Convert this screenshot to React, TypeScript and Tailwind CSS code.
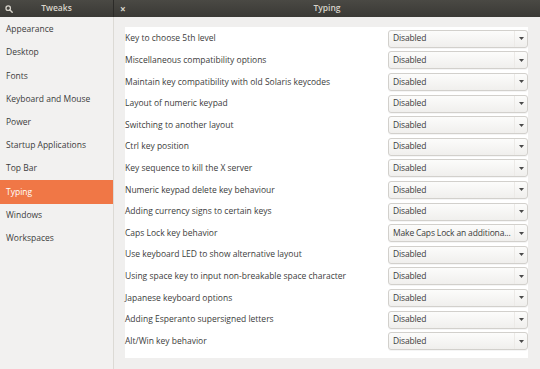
import React from 'react';

const sections = [
  'Appearance',
  'Desktop',
  'Fonts',
  'Keyboard and Mouse',
  'Power',
  'Startup Applications',
  'Top Bar',
  'Typing',
  'Windows',
  'Workspaces',
];

const options: { label: string; value: string }[] = [
  { label: 'Key to choose 5th level', value: 'Disabled' },
  { label: 'Miscellaneous compatibility options', value: 'Disabled' },
  { label: 'Maintain key compatibility with old Solaris keycodes', value: 'Disabled' },
  { label: 'Layout of numeric keypad', value: 'Disabled' },
  { label: 'Switching to another layout', value: 'Disabled' },
  { label: 'Ctrl key position', value: 'Disabled' },
  { label: 'Key sequence to kill the X server', value: 'Disabled' },
  { label: 'Numeric keypad delete key behaviour', value: 'Disabled' },
  { label: 'Adding currency signs to certain keys', value: 'Disabled' },
  { label: 'Caps Lock key behavior', value: 'Make Caps Lock an additiona...' },
  { label: 'Use keyboard LED to show alternative layout', value: 'Disabled' },
  { label: 'Using space key to input non-breakable space character', value: 'Disabled' },
  { label: 'Japanese keyboard options', value: 'Disabled' },
  { label: 'Adding Esperanto supersigned letters', value: 'Disabled' },
  { label: 'Alt/Win key behavior', value: 'Disabled' },
];

function Combo({ value }: { value: string }) {
  return (
    <div className="flex h-[18px] w-[140px] items-center rounded-[3px] border border-[#d2d0cc] bg-gradient-to-b from-[#fcfcfb] to-[#f0efed] pl-[4px] shadow-[0_1px_0_rgba(0,0,0,0.04)]">
      <span className="flex-1 whitespace-nowrap tracking-[-0.15px] text-[#3c3c3c]">{value}</span>
      <div className="flex h-full w-[13px] shrink-0 items-center justify-center border-l border-[#eceae7]">
        <svg width="5" height="3" viewBox="0 0 5 3">
          <path d="M0 0 L5 0 L2.5 3 Z" fill="#4a4a4a" />
        </svg>
      </div>
    </div>
  );
}

export default function App() {
  return (
    <div
      className="flex h-[369px] w-[540px] flex-col overflow-hidden bg-[#f2f1f0] text-[8.5px] text-[#3c3c3c]"
      style={{ fontFamily: '"Open Sans", "Noto Sans", sans-serif' }}
    >
      {/* Header bar */}
      <header className="flex h-[17px] shrink-0 bg-gradient-to-b from-[#4a4944] to-[#3a3935] text-[#d8d4cb]">
        <div className="relative flex w-[114px] items-center border-r border-[#2c2b28]">
          <svg width="8" height="8" viewBox="0 0 10 10" className="ml-[5px]">
            <circle cx="4" cy="4" r="2.8" fill="none" stroke="#d8d4cb" strokeWidth="1.6" />
            <path d="M6 6 L9 9" stroke="#d8d4cb" strokeWidth="1.8" strokeLinecap="round" />
          </svg>
          <span className="flex-1 text-center font-semibold pr-[13px]">Tweaks</span>
        </div>
        <div className="flex flex-1 items-center">
          <span className="ml-[6px] w-[10px] text-[10px] font-bold leading-none">×</span>
          <span className="flex-1 text-center font-semibold pr-[16px]">Typing</span>
        </div>
      </header>

      <div className="flex flex-1">
        {/* Sidebar */}
        <nav className="flex w-[114px] flex-col border-r border-[#dcdad5] bg-[#f2f1f0] pt-[1px]">
          {sections.map((s) => (
            <div
              key={s}
              className={
                s === 'Typing'
                  ? 'flex h-[23.2px] items-center bg-[#f07746] pl-[6px] text-white'
                  : 'flex h-[23.2px] items-center pl-[6px]'
              }
            >
              {s}
            </div>
          ))}
        </nav>

        {/* Content */}
        <main className="flex-1 bg-[#f0efee] pl-[11px] pr-[12px] pt-[10px]">
          <div className="flex flex-col bg-white py-[1px]">
            {options.map((o) => (
              <div key={o.label} className="flex h-[21.6px] items-center justify-between">
                <span>{o.label}</span>
                <Combo value={o.value} />
              </div>
            ))}
            <div className="h-[5px]" />
          </div>
        </main>
      </div>
    </div>
  );
}
